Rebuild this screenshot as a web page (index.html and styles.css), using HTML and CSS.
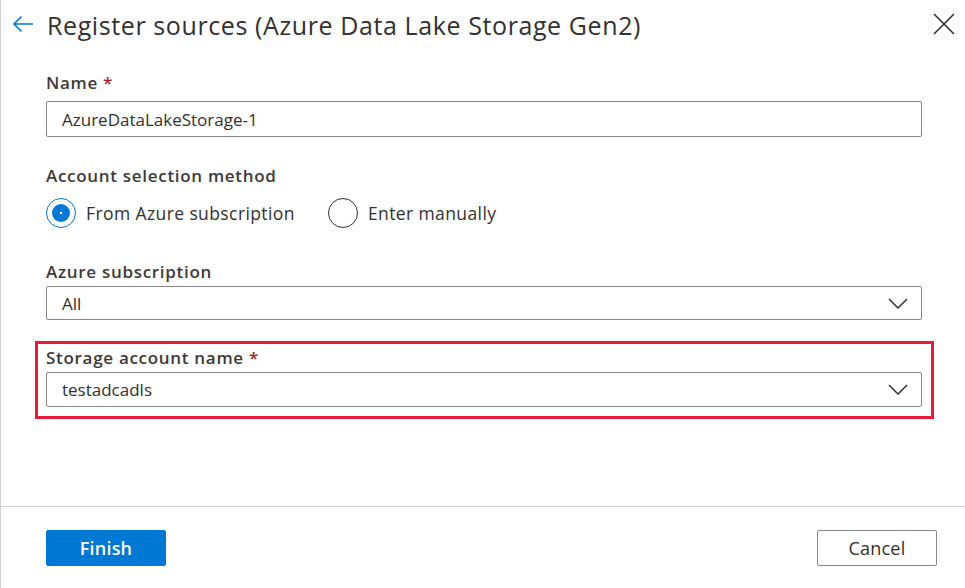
FILE: index.html
```html
<!DOCTYPE html>
<html lang="en">
<head>
<meta charset="utf-8">
<title>Register sources</title>
<link rel="stylesheet" href="styles.css">
</head>
<body>
<div class="panel">
  <header class="head">
    <button class="icon-btn back" aria-label="Back">
      <svg width="22" height="18" viewBox="0 0 22 18"><path d="M21 9H2M9.5 1.5L2 9l7.5 7.5" fill="none" stroke="#0078d4" stroke-width="1.6"/></svg>
    </button>
    <h1 class="title">Register sources (Azure Data Lake Storage Gen2)</h1>
    <button class="icon-btn close" aria-label="Close">
      <svg width="22" height="22" viewBox="0 0 22 22"><path d="M1 1l20 20M21 1L1 21" fill="none" stroke="#323130" stroke-width="1.6"/></svg>
    </button>
  </header>

  <main class="body">
    <div class="field">
      <label class="label">Name <span class="req">*</span></label>
      <div class="input">AzureDataLakeStorage-1</div>
    </div>

    <div class="field method">
      <label class="label">Account selection method</label>
      <div class="radios">
        <div class="radio checked"><span class="dot"></span><span class="rtext">From Azure subscription</span></div>
        <div class="radio"><span class="dot"></span><span class="rtext">Enter manually</span></div>
      </div>
    </div>

    <div class="field sub">
      <label class="label">Azure subscription</label>
      <div class="input select">
        <span>All</span>
        <svg width="20" height="11" viewBox="0 0 20 11"><path d="M1 1l9 9 9-9" fill="none" stroke="#323130" stroke-width="1.5"/></svg>
      </div>
    </div>

    <div class="highlight">
      <label class="label">Storage account name <span class="req">*</span></label>
      <div class="input select">
        <span>testadcadls</span>
        <svg width="20" height="11" viewBox="0 0 20 11"><path d="M1 1l9 9 9-9" fill="none" stroke="#323130" stroke-width="1.5"/></svg>
      </div>
    </div>
  </main>

  <footer class="foot">
    <button class="btn primary">Finish</button>
    <button class="btn">Cancel</button>
  </footer>
</div>
</body>
</html>
```

FILE: styles.css
```css
* { box-sizing: border-box; }
html, body { margin: 0; padding: 0; background: #fff; }
body {
  font-family: "Segoe UI", "Open Sans", "Noto Sans", sans-serif;
  color: #323130;
}
.panel {
  height: 588px;
  border-left: 1px solid #d2d0ce;
  display: flex;
  flex-direction: column;
}
.head {
  display: flex;
  align-items: center;
  height: 50px;
  padding: 0 10px 0 11px;
}
.icon-btn {
  background: none;
  border: 0;
  padding: 0;
  display: flex;
  align-items: center;
  justify-content: center;
}
.back { width: 22px; height: 22px; margin-right: 13px; margin-top: -2px; }
.title {
  flex: 1;
  margin: 0;
  font-size: 25px;
  font-weight: 400;
  letter-spacing: 0.6px;
  color: #323130;
  white-space: nowrap;
}
.close { width: 22px; height: 22px; margin-top: -2px; }

.body {
  flex: 1;
  padding: 21px 43px 0 45px;
}
.field { display: flex; flex-direction: column; }
.label {
  font-size: 17px;
  font-weight: 600;
  line-height: 24px;
  color: #3b3a39;
  letter-spacing: 0.7px;
}
.req { color: #a4262c; font-weight: 600; }
.input {
  margin-top: 6px;
  height: 36px;
  border: 1px solid #8a8886;
  border-radius: 2px;
  padding: 0 15px;
  display: flex;
  align-items: center;
  font-size: 17px;
  color: #323130;
}
.select { justify-content: space-between; height: 34px; margin-top: 2px; padding-right: 13px; }

.method { margin-top: 27px; }
.radios { display: flex; gap: 33px; margin-top: 10px; }
.radio { display: flex; align-items: center; gap: 10px; }
.dot {
  width: 30px; height: 30px;
  border-radius: 50%;
  border: 1.5px solid #323130;
  position: relative;
}
.radio.checked .dot { border-color: #0078d4; }
.radio.checked .dot::after {
  content: "";
  position: absolute;
  left: 4.5px; top: 4.5px;
  width: 18px; height: 18px;
  border-radius: 50%;
  background: #0078d4 radial-gradient(circle, #fff 0 1.2px, transparent 1.6px);
}
.rtext { font-size: 17.5px; letter-spacing: 0.4px; color: #323130; }

.sub { margin-top: 32px; }

.highlight {
  margin: 21px -12px 0 -11px;
  border: 3px solid #e81b3c;
  padding: 2px 9px 9px 8px;
  display: flex;
  flex-direction: column;
}
.highlight .select { height: 35px; }

.foot {
  height: 82px;
  border-top: 1px solid #d2d0ce;
  display: flex;
  justify-content: space-between;
  align-items: flex-start;
  padding: 23px 28px 0 45px;
}
.btn {
  width: 120px;
  height: 36px;
  border: 1px solid #8a8886;
  border-radius: 2px;
  background: #fff;
  font-family: inherit;
  font-size: 18px;
  letter-spacing: 0.2px;
  color: #323130;
  padding: 0;
}
.btn.primary {
  background: #0078d4;
  border-color: #0078d4;
  color: #fff;
  font-weight: 600;
}
```
